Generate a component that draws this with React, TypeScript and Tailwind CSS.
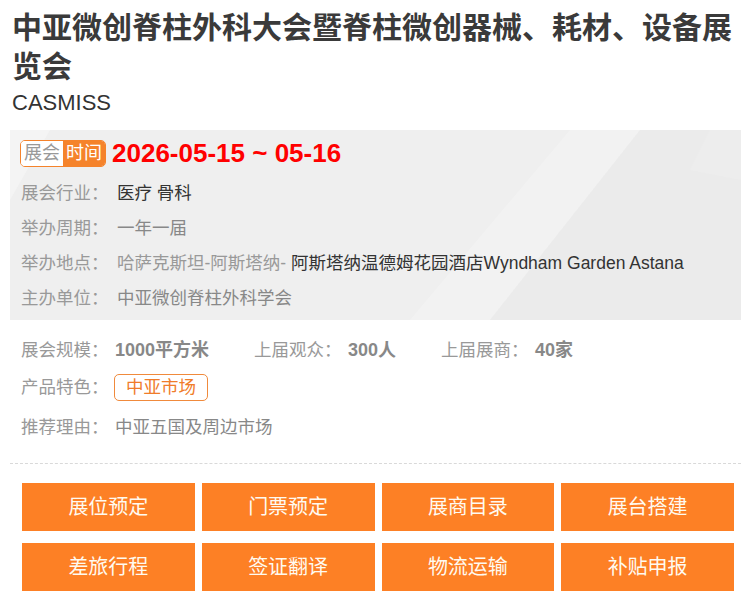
const font = "font-['Liberation_Sans','Noto_Sans_CJK_SC',sans-serif]"

const infoRows: { label: string; value: React.ReactNode }[] = [
  { label: '展会行业：', value: <span className="text-[#333]">医疗 骨科</span> },
  { label: '举办周期：', value: <span className="text-[#888]">一年一届</span> },
  {
    label: '举办地点：',
    value: (
      <>
        <span className="text-[#999]">哈萨克斯坦-阿斯塔纳- </span>
        <span className="text-[#333]">阿斯塔纳温德姆花园酒店Wyndham Garden Astana</span>
      </>
    ),
  },
  { label: '主办单位：', value: <span className="text-[#888]">中亚微创脊柱外科学会</span> },
]

const stats = [
  { label: '展会规模：', value: '1000平方米' },
  { label: '上届观众：', value: '300人' },
  { label: '上届展商：', value: '40家' },
]

const actions = ['展位预定', '门票预定', '展商目录', '展台搭建', '差旅行程', '签证翻译', '物流运输', '补贴申报']

function BoxBackground() {
  return (
    <svg className="absolute inset-0 h-full w-full" viewBox="0 0 731 190" preserveAspectRatio="none">
      <rect width="731" height="190" fill="#efefef" />
      <polygon points="0,0 40,0 0,70" fill="#f4f4f4" />
      <polygon points="560,0 630,0 480,190 400,190" fill="#f2f2f2" />
      <polygon points="630,0 731,0 731,190 480,190" fill="#ebebeb" />
      <polygon points="700,0 731,0 731,50 680,40" fill="#ededed" />
    </svg>
  )
}

export default function App() {
  return (
    <div className={`w-[756px] min-h-[604px] bg-white px-[10px] ${font}`}>
      {/* Title */}
      <h1 className="pl-[2px] pt-[8px] text-[30px] leading-[39px] font-bold text-[#3a3a3a]">
        中亚微创脊柱外科大会暨脊柱微创器械、耗材、设备展览会
      </h1>
      <div className="pl-[2px] text-[22px] leading-[33px] text-[#333]">CASMISS</div>

      {/* Grey info box */}
      <div className="relative mt-[11px] h-[190px] w-[731px] overflow-hidden">
        <BoxBackground />
        <div className="relative px-[10px] pt-[10px]">
          <div className="flex items-center gap-[6px]">
            <div className="flex h-[27px] overflow-hidden rounded-[5px] border border-[#f5832b] text-[18px] leading-[25px]">
              <span className="bg-white px-[3px] text-[#999]">展会</span>
              <span className="bg-[#f5832b] px-[3px] text-white">时间</span>
            </div>
            <span className="text-[26px] leading-[27px] font-bold text-[#f00]">2026-05-15 ~ 05-16</span>
          </div>
          <div className="mt-[9px] pl-[1px]">
            {infoRows.map((r) => (
              <div key={r.label} className="flex h-[35px] items-center text-[17.5px]">
                <span className="w-[96px] shrink-0 text-[#999]">{r.label}</span>
                <span className="whitespace-nowrap">{r.value}</span>
              </div>
            ))}
          </div>
        </div>
      </div>

      {/* Lower rows */}
      <div className="mt-[12px] pl-[11px] text-[17.5px]">
        <div className="flex h-[37px] items-center gap-[45px]">
          {stats.map((s) => (
            <div key={s.label} className="flex items-center">
              <span className="w-[94px] text-[#999]">{s.label}</span>
              <span className="text-[18px] font-bold text-[#888]">{s.value}</span>
            </div>
          ))}
        </div>
        <div className="flex h-[37px] items-center">
          <span className="w-[93px] text-[#999]">产品特色：</span>
          <span className="flex h-[27px] items-center rounded-[5px] border border-[#f08a3c] px-[11px] text-[#f07c2a]">
            中亚市场
          </span>
        </div>
        <div className="mt-[2px] flex h-[39px] items-center">
          <span className="w-[94px] text-[#999]">推荐理由：</span>
          <span className="text-[#888]">中亚五国及周边市场</span>
        </div>
      </div>

      <div className="mt-[16px] w-[731px] border-t border-dashed border-[#d9d9d9]" />

      {/* Action buttons */}
      <div className="mt-[19px] grid grid-cols-4 gap-x-[7px] gap-y-[12px] px-[12px]">
        {actions.map((a) => (
          <button
            key={a}
            className="flex h-[48px] items-center justify-center bg-[#fd8025] text-[20px] text-[#fffaf0]"
          >
            {a}
          </button>
        ))}
      </div>
    </div>
  )
}
